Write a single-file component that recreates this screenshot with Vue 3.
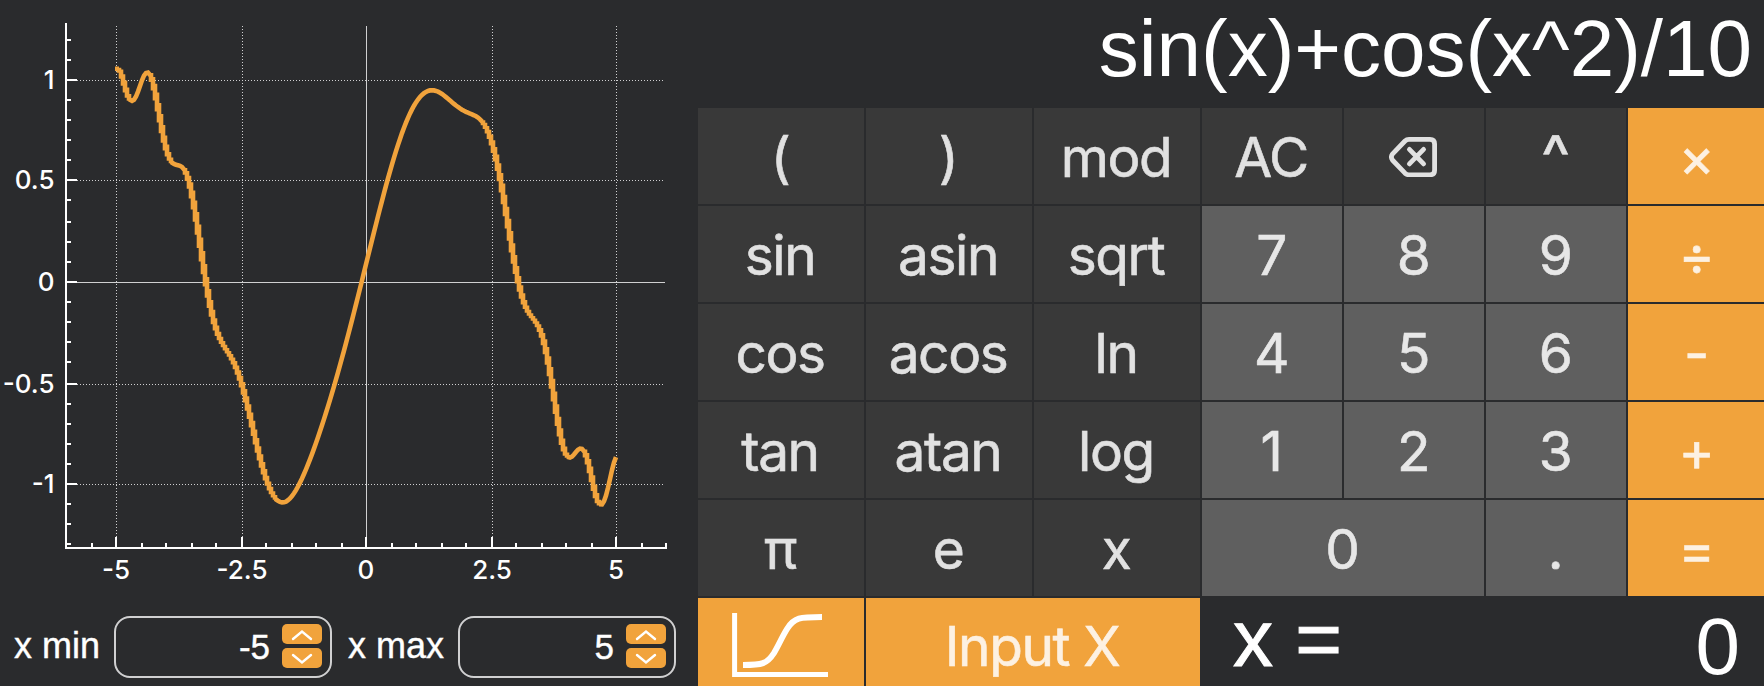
<script setup>
const xTicks = [92, 116, 142, 166, 192, 216, 242, 266, 292, 316, 342, 366, 392, 416, 442, 466, 492, 516, 542, 566, 592, 616, 642, 666]
const yTicks = [40, 60, 80, 100, 120, 140, 160, 180, 200, 222, 242, 262, 282, 302, 322, 342, 362, 384, 404, 424, 444, 464, 484, 504, 524, 544]
const xMajor = [
  { at: 116, label: '-5' },
  { at: 242, label: '-2.5' },
  { at: 366, label: '0', solid: true },
  { at: 492, label: '2.5' },
  { at: 616, label: '5' },
]
const yMajor = [
  { at: 80, label: '1' },
  { at: 180, label: '0.5' },
  { at: 282, label: '0', solid: true },
  { at: 384, label: '-0.5' },
  { at: 484, label: '-1' },
]
const isMajor = (list, v) => list.some((m) => m.at === v)

const f = (x) => Math.sin(x) + Math.cos(x * x) / 10

// Falling stretches are drawn as overlapping vertical bars, the rest as a smooth line.
function buildCurve() {
  const py = (px) => 282.5 - 202 * f((px - 366.5) / 50)
  let d = `M115 ${py(116.5).toFixed(1)}`
  let last = py(116.5)
  for (let px = 118; px <= 617; px += 2) {
    const y = py(px)
    const dy = y - last
    if (dy > 2.4) {
      const over = dy * 0.4
      d += `H${px - 1}V${(last - over).toFixed(1)}V${(y + over).toFixed(1)}V${y.toFixed(1)}`
    } else {
      d += `L${px} ${y.toFixed(1)}`
    }
    last = y
  }
  return d
}
const curve = buildCurve()

const keys = [
  ['(', 'fn'], [')', 'fn'], ['mod', 'fn'], ['AC', 'fn'], ['⌫', 'fn', 'del'], ['^', 'fn', 'caret'], ['×', 'op'],
  ['sin', 'fn'], ['asin', 'fn'], ['sqrt', 'fn'], ['7', 'num'], ['8', 'num'], ['9', 'num'], ['÷', 'op'],
  ['cos', 'fn'], ['acos', 'fn'], ['ln', 'fn'], ['4', 'num'], ['5', 'num'], ['6', 'num'], ['-', 'op'],
  ['tan', 'fn'], ['atan', 'fn'], ['log', 'fn'], ['1', 'num'], ['2', 'num'], ['3', 'num'], ['+', 'op'],
  ['π', 'fn'], ['e', 'fn'], ['x', 'fn'], ['0', 'num', 'wide'], ['.', 'num'], ['=', 'op'],
]
const ranges = [
  { label: 'x min', value: '-5', cls: 'first' },
  { label: 'x max', value: '5', cls: 'second' },
]
</script>

<template>
  <div class="app">
    <section class="graph">
      <svg class="plot" width="698" height="600" viewBox="0 0 698 600">
        <g class="grid">
          <line v-for="m in xMajor" :key="'x' + m.at" :class="{ dotted: !m.solid }" :x1="m.at + 0.5" y1="26" :x2="m.at + 0.5" y2="538" />
          <line v-for="m in yMajor" :key="'y' + m.at" :class="{ dotted: !m.solid }" x1="77" :y1="m.at + 0.5" x2="665" :y2="m.at + 0.5" />
        </g>
        <path class="curve" :d="curve" />
        <g class="axis">
          <path d="M66 23V548H667" />
          <line v-for="t in xTicks" :key="'tx' + t" :x1="t" y1="548" :x2="t" :y2="isMajor(xMajor, t) ? 537 : 543" />
          <line v-for="t in yTicks" :key="'ty' + t" x1="66" :y1="t" :x2="isMajor(yMajor, t) ? 77 : 71" :y2="t" />
        </g>
        <g class="labels">
          <text v-for="m in xMajor" :key="'lx' + m.at" :x="m.at" y="579" text-anchor="middle">{{ m.label }}</text>
          <text v-for="m in yMajor" :key="'ly' + m.at" x="54.5" :y="m.at + 9" text-anchor="end">{{ m.label }}</text>
        </g>
      </svg>
      <div class="ranges">
        <template v-for="r in ranges" :key="r.label">
          <label :class="r.cls">{{ r.label }}</label>
          <div class="field">
            <span>{{ r.value }}</span>
            <div class="stepper">
              <button><svg width="40" height="20" viewBox="0 0 40 20"><path d="M11 15L20 7.5L29 15" /></svg></button>
              <button><svg width="40" height="20" viewBox="0 0 40 20"><path d="M11 7L20 14.5L29 7" /></svg></button>
            </div>
          </div>
        </template>
      </div>
    </section>

    <section class="calc">
      <div class="display">sin(x)+cos(x^2)/10</div>
      <div class="keys">
        <button v-for="[label, kind, extra] in keys" :key="label" :class="['key', kind, extra]">
          <svg v-if="extra === 'del'" class="delete" width="48" height="40" viewBox="0 0 48 40">
            <path d="M3.4 17.2L16 4Q17.6 2.4 20 2.4H41Q45.6 2.4 45.6 7V33.2Q45.6 37.8 41 37.8H20Q17.6 37.8 16 36.2L3.4 23Q1.4 20.1 3.4 17.2Z" />
            <path d="M20.4 12.4L34.6 26.9M34.6 12.4L20.4 26.9" />
          </svg>
          <span v-else>{{ label }}</span>
        </button>
        <button class="key op chart-key">
          <svg class="chart" width="96" height="64" viewBox="0 0 96 64">
            <path class="frame" d="M2.6 0V61.5H96" />
            <path class="wave" d="M11 52C30 52 35 51 42 40C47 31.500 50 24 55 16C62 4.500 68 4 90 4" />
          </svg>
        </button>
        <button class="key op input-x"><span>Input X</span></button>
        <div class="variable">
          <span class="name">x =</span>
          <span class="value">0</span>
        </div>
      </div>
    </section>
  </div>
</template>

<style>
body {
  background: #2a2b2d;
}
</style>

<style scoped>
.app {
  display: flex;
  width: 1764px;
  height: 686px;
  overflow: hidden;
  background: #2a2b2d;
  color: #fff;
  font-family: "Liberation Sans", Arial, sans-serif;
}
button {
  border: 0;
  padding: 0;
  margin: 0;
  font: inherit;
  color: inherit;
}
.graph {
  width: 698px;
}
.plot {
  display: block;
}
.grid line {
  stroke: #d0d0d1;
  stroke-width: 1;
}
.grid .dotted {
  stroke-dasharray: 1 2;
}
.axis {
  fill: none;
  stroke: #fff;
  stroke-width: 2;
}
.curve {
  fill: none;
  stroke: #f1a33c;
  stroke-width: 4.6;
}
.labels {
  fill: #fff;
  font: 500 26px Inter, sans-serif;
}
.ranges {
  display: flex;
  align-items: center;
  padding-top: 16px;
}
label {
  box-sizing: border-box;
  font-size: 36px;
  line-height: 60px;
  height: 62px;
  white-space: nowrap;
  -webkit-text-stroke: 0.4px #fff;
}
.first {
  width: 114px;
  padding-left: 14px;
}
.second {
  width: 126px;
  padding-left: 16px;
}
.field {
  box-sizing: border-box;
  width: 218px;
  height: 62px;
  border: 2px solid #d0d0d1;
  border-radius: 16px;
  padding-right: 8px;
  display: flex;
  align-items: center;
  justify-content: flex-end;
  gap: 12px;
  font-size: 35px;
  -webkit-text-stroke: 0.4px #fff;
}
.stepper {
  display: flex;
  flex-direction: column;
  gap: 4px;
  margin-bottom: 2px;
}
.stepper button {
  width: 40px;
  height: 20px;
  border-radius: 5px;
  background: #f1a33c;
}
.stepper svg {
  display: block;
  fill: none;
  stroke: #fff;
  stroke-width: 2.4;
  stroke-linecap: round;
}
.calc {
  width: 1066px;
}
.display {
  height: 108px;
  line-height: 97px;
  font-size: 80px;
  text-align: right;
  padding-right: 12px;
  white-space: nowrap;
}
.keys {
  display: grid;
  grid-template-columns: 166px 166px 166px 140px 140px 140px 136px;
  grid-template-rows: repeat(5, 96px) 88px;
  gap: 2px;
}
.key {
  display: flex;
  align-items: center;
  justify-content: center;
  font: 400 55px/64px Inter, sans-serif;
  letter-spacing: -1.4px;
  -webkit-text-stroke: 0.6px currentColor;
}
.key span {
  padding: 1px 2px 0 0;
}
.fn {
  background: #393939;
  color: #e1e1e1;
}
.num {
  background: #5f5f5f;
  color: #e7e7e7;
}
.op {
  background: #f1a33c;
  color: #fdf1e2;
}
.op span {
  padding: 1px 0 0;
}
.caret {
  font-size: 62px;
}
.wide,
.input-x {
  grid-column: span 2;
}
.input-x span {
  padding: 8px 2px 0 0;
}
.delete {
  fill: none;
  stroke: #e1e1e1;
  stroke-width: 4.8;
  stroke-linecap: round;
  stroke-linejoin: round;
  margin: 2px 2px 0 0;
}
.chart-key {
  padding: 6px 2px 0 0;
}
.chart {
  fill: none;
  stroke: #fff;
}
.frame {
  stroke-width: 5;
}
.wave {
  stroke-width: 6;
}
.variable {
  grid-column: span 4;
  display: flex;
  justify-content: space-between;
  padding: 0 24px 0 31px;
  font-size: 80px;
  line-height: 76px;
}
.name {
  padding-top: 3px;
  -webkit-text-stroke: 1px #fff;
}
.value {
  padding-top: 11px;
}
</style>
